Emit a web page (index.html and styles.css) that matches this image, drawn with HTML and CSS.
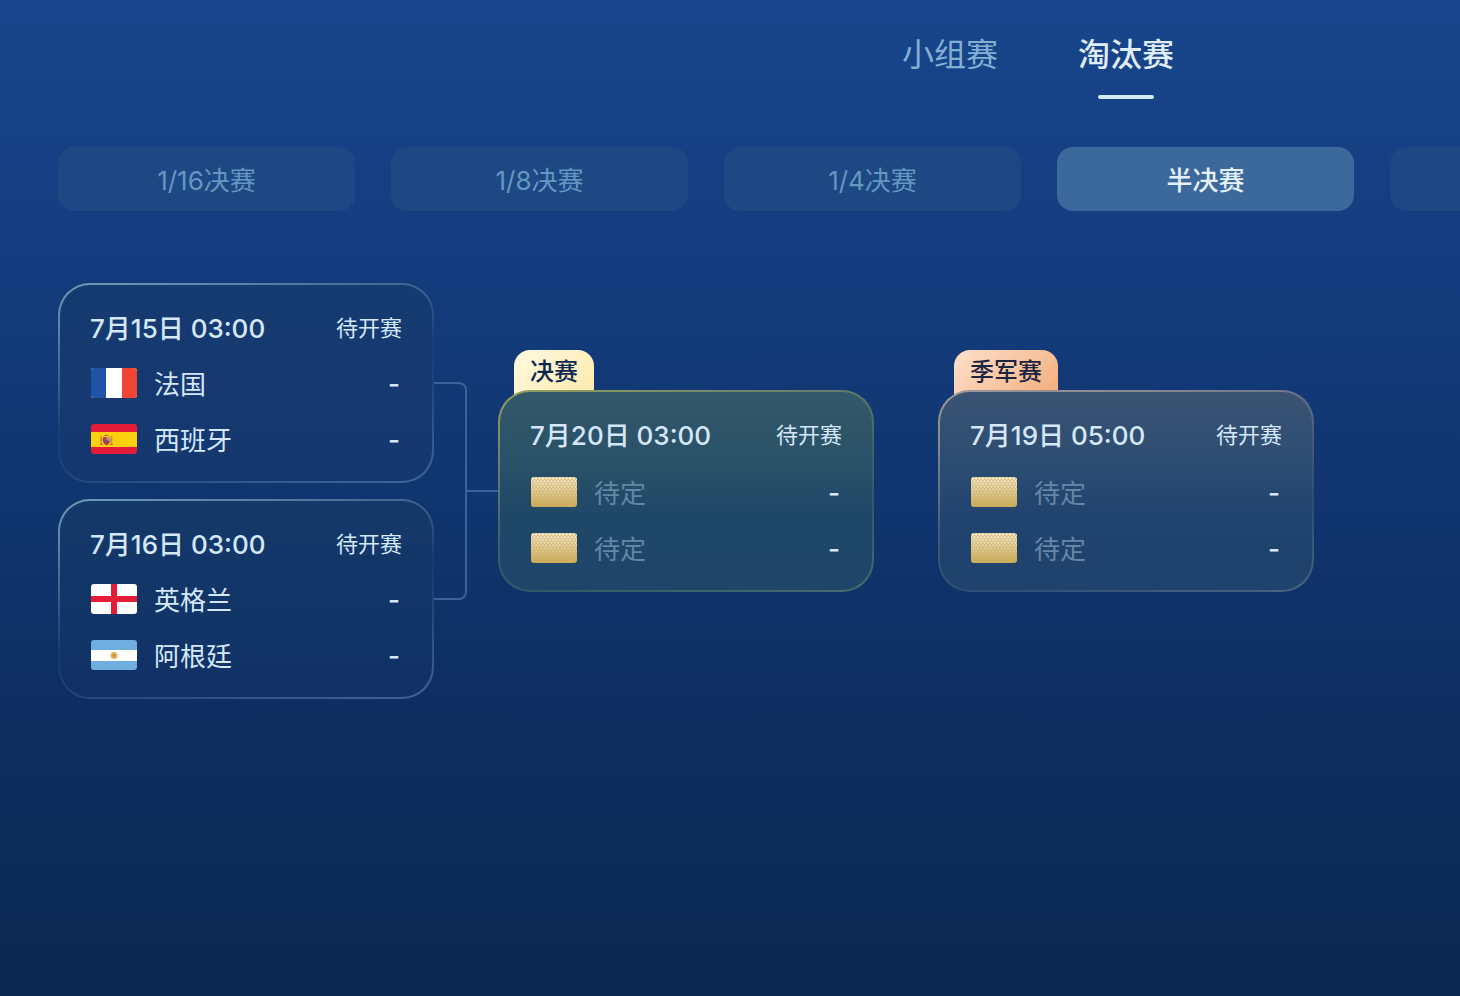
FILE: index.html
```html
<!doctype html>
<html lang="zh-CN">

	<head>
		<title>淘汰赛</title>
		<meta charset="utf-8" />
		<link rel="stylesheet" href="styles.css">
	</head>

	<body>

		<!-- 公用图形 -->
		<svg class="defs" width="0" height="0">
			<defs>
				<linearGradient id="gold" x1="0" y1="0" x2="0" y2="1">
					<stop offset="0" stop-color="#d9bf85" />
					<stop offset="1" stop-color="#cbad5c" />
				</linearGradient>
				<linearGradient id="fade" x1="0" y1="0" x2="0" y2="1">
					<stop offset="0" stop-color="#fff" />
					<stop offset="0.9" stop-color="#000" />
				</linearGradient>
				<pattern id="dots" width="3.400" height="5.600" patternUnits="userSpaceOnUse">
					<circle cx="1.700" cy="1.400" r="1.100" fill="#fff6e2" />
					<circle cx="0" cy="4.200" r="1.100" fill="#fff6e2" />
					<circle cx="3.400" cy="4.200" r="1.100" fill="#fff6e2" />
				</pattern>
				<mask id="dotMask">
					<rect width="46" height="30" fill="url(#fade)" />
				</mask>
				<symbol id="tbd" viewBox="0 0 46 30">
					<rect width="46" height="30" fill="url(#gold)" />
					<rect width="46" height="30" fill="url(#dots)" mask="url(#dotMask)" />
				</symbol>
			</defs>
		</svg>

		<nav class="tabs">
			<button type="button">小组赛</button>
			<button type="button" class="active">淘汰赛</button>
		</nav>

		<nav class="rounds">
			<button type="button">1/16决赛</button>
			<button type="button">1/8决赛</button>
			<button type="button">1/4决赛</button>
			<button type="button" class="active">半决赛</button>
			<button type="button" aria-label="决赛"></button>
		</nav>

		<main class="bracket">
			<div class="semi">
				<section class="card">
					<header><time>7月15日 03:00</time><span>待开赛</span></header>
					<div class="team">
						<svg class="flag" viewBox="0 0 46 30">
							<rect width="46" height="30" fill="#fff" />
							<rect width="15" height="30" fill="#2053a5" />
							<rect x="31" width="15" height="30" fill="#f04535" />
						</svg>
						<span class="name">法国</span>
						<b>-</b>
					</div>
					<div class="team">
						<svg class="flag" viewBox="0 0 46 30">
							<rect width="46" height="30" fill="#e31d37" />
							<rect y="8" width="46" height="15" fill="#fdd00f" />
							<path d="M10 12v8M20.500 12v8" stroke="#b5924f" stroke-width="1.500" />
							<path d="M9 20.500h3M19 20.500h3M9 16h12" stroke="#c9703a" />
							<path d="M12 13h7v5q-1 3-3.500 3.500q-2.500-.5-3.500-3.500z" fill="#c2403a" />
							<path d="M15.500 13h3.500v4h-3.500z" fill="#c98a86" />
							<circle cx="15.500" cy="17" r="1.500" fill="#4a5c93" />
							<path d="M13 12q2.500-2.500 5 0z" fill="#a8622c" />
						</svg>
						<span class="name">西班牙</span>
						<b>-</b>
					</div>
				</section>
				<section class="card">
					<header><time>7月16日 03:00</time><span>待开赛</span></header>
					<div class="team">
						<svg class="flag" viewBox="0 0 46 30">
							<rect width="46" height="30" fill="#fff" />
							<path d="M20 0h6v30h-6zM0 12h46v6H0z" fill="#e41c37" />
						</svg>
						<span class="name">英格兰</span>
						<b>-</b>
					</div>
					<div class="team">
						<svg class="flag" viewBox="0 0 46 30">
							<rect width="46" height="30" fill="#70aee0" />
							<rect y="10" width="46" height="11" fill="#fff" />
							<circle cx="23" cy="15.500" r="3.500" fill="#e3b45c" />
							<circle cx="23" cy="15.500" r="1.800" fill="#d1933b" />
						</svg>
						<span class="name">阿根廷</span>
						<b>-</b>
					</div>
				</section>
			</div>

			<div class="link"><i class="fork"></i><i class="line"></i></div>

			<div class="wrap">
				<h2 class="tag">决赛</h2>
				<section class="card final">
					<header><time>7月20日 03:00</time><span>待开赛</span></header>
					<div class="team tbd">
						<svg class="flag"><use href="#tbd" /></svg>
						<span class="name">待定</span>
						<b>-</b>
					</div>
					<div class="team tbd">
						<svg class="flag"><use href="#tbd" /></svg>
						<span class="name">待定</span>
						<b>-</b>
					</div>
				</section>
			</div>

			<div class="wrap third-wrap">
				<h2 class="tag third-tag">季军赛</h2>
				<section class="card third">
					<header><time>7月19日 05:00</time><span>待开赛</span></header>
					<div class="team tbd">
						<svg class="flag"><use href="#tbd" /></svg>
						<span class="name">待定</span>
						<b>-</b>
					</div>
					<div class="team tbd">
						<svg class="flag"><use href="#tbd" /></svg>
						<span class="name">待定</span>
						<b>-</b>
					</div>
				</section>
			</div>
		</main>

	</body>

</html>
```

FILE: styles.css
```css
* {
	box-sizing: border-box;
}

body {
	margin: 0;
	min-height: 100vh;
	overflow-x: hidden;
	background: linear-gradient(#18458c 0%, #153e80 22%, #10356f 50%, #0e2e61 72%, #0a2850 100%);
	color: #d5e8fa;
	font-family: Inter, "Noto Sans CJK SC", sans-serif;
}

button {
	border: none;
	padding: 0;
	background: none;
	color: inherit;
	font: inherit;
	cursor: pointer;
}

.defs {
	position: absolute;
}

/* 顶部切换 */
.tabs {
	display: flex;
	justify-content: flex-end;
	gap: 80px;
	padding: 31px 286px 0 0;
}

.tabs button {
	display: flex;
	flex-direction: column;
	align-items: center;
	height: 68px;
	font-size: 32px;
	line-height: 48px;
	color: #82b0d3;
}

.tabs .active {
	color: #e0eefa;
	font-weight: 500;
}

.tabs .active::after {
	content: "";
	width: 56px;
	height: 4px;
	margin-top: 16px;
	border-radius: 2px;
	background: #d5e8f5;
}

/* 轮次 */
.rounds {
	display: flex;
	gap: 36px;
	padding: 48px 0 0 58px;
	overflow: hidden;
}

.rounds button {
	flex: none;
	width: 297px;
	height: 64px;
	padding-bottom: 2px;
	border-radius: 16px;
	background: #1d4883;
	color: #6496c2;
	font-size: 26px;
}

.rounds .active {
	background: #3c699b;
	color: #e4f0fb;
	font-weight: 500;
}

/* 对阵图 */
.bracket {
	display: flex;
	align-items: center;
	padding: 72px 58px;
}

.semi {
	display: flex;
	flex-direction: column;
	gap: 16px;
}

.card {
	width: 376px;
	padding: 22px 30px 14px;
	border: 2px solid transparent;
	border-radius: 32px;
	background:
		linear-gradient(#153b71, #15376f) padding-box,
		linear-gradient(166deg, #6f9db8 0%, #567fa5 18%, #183d74 52%, #1c4279 62%, #41679b 100%) border-box;
}

.card + .card {
	background:
		linear-gradient(#143969, #113166) padding-box,
		linear-gradient(166deg, #6f9db8 0%, #567fa5 18%, #173a6d 52%, #1c4074 62%, #41659b 100%) border-box;
}

.card header {
	display: flex;
	justify-content: space-between;
	align-items: center;
	height: 38px;
	margin-bottom: 10px;
	font-size: 22px;
}

.card time {
	font-size: 26px;
	font-weight: 500;
}

.team {
	display: flex;
	align-items: center;
	height: 56px;
	font-size: 26px;
}

.flag {
	width: 46px;
	height: 30px;
	margin: 0 17px 0 1px;
	border-radius: 3px;
}

.name {
	flex: 1;
	padding-bottom: 2px;
}

.team b {
	margin-right: 2px;
	font-weight: 500;
}

.tbd .name {
	color: #6487a6;
}

/* 连线 */
.link {
	display: flex;
	align-items: center;
	width: 64px;
}

.fork {
	width: 33px;
	height: 218px;
	border: 2px solid #3a639b;
	border-left: none;
	border-radius: 0 8px 8px 0;
}

.line {
	flex: 1;
	height: 2px;
	background: #3a639b;
}

.wrap {
	position: relative;
	isolation: isolate;
}

.third-wrap {
	margin-left: 64px;
}

.final {
	background:
		linear-gradient(#34586a, #2a5168 35%, #1e4768 65%, #1f4669) padding-box,
		linear-gradient(166deg, #96a05c 0%, #71876d 20%, #3e6366 50%, #31586a 70%, #486c6d 100%) border-box;
}

.third {
	background:
		linear-gradient(#3a5373, #2c4d72 35%, #20436f 65%, #1f436c) padding-box,
		linear-gradient(166deg, #a39a98 0%, #82868f 20%, #42597a 50%, #2c4d76 70%, #4b6480 100%) border-box;
}

.final header,
.third header {
	margin-bottom: 12px;
}

.tag {
	position: absolute;
	z-index: -1;
	top: -40px;
	left: 16px;
	height: 46px;
	margin: 0;
	padding: 0 16px;
	border-radius: 16px 16px 0 0;
	background: linear-gradient(135deg, #fffae0, #fce9ac);
	color: #0d2850;
	font-size: 24px;
	font-weight: 500;
	line-height: 43px;
	white-space: nowrap;
}

.third-tag {
	background: linear-gradient(135deg, #fde0cc, #f4ae7c);
	color: #1d2440;
}
```
